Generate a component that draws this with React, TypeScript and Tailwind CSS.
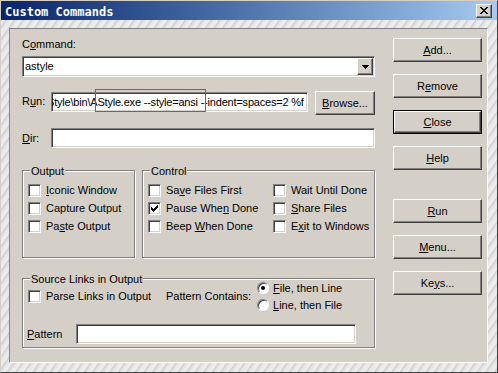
import React from "react";

const sunken =
  "border border-t-[#808080] border-l-[#808080] border-b-white border-r-white shadow-[inset_1px_1px_0_#404040,inset_-1px_-1px_0_#d4d0c8]";
const raised =
  "border border-t-white border-l-white border-b-[#404040] border-r-[#404040] shadow-[inset_-1px_-1px_0_#808080]";

function pixelPath(rows: string[]) {
  let d = "";
  rows.forEach((row, y) => {
    row.split("").forEach((c, x) => {
      if (c === "#") d += `M${x} ${y}h1v1h-1z`;
    });
  });
  return d;
}

const checkMark = pixelPath([
  "......#",
  ".....##",
  "#...###",
  "##.###.",
  "#####..",
  ".###...",
  "..#....",
]);

const closeX = pixelPath([
  "##....##",
  ".##..##.",
  "..####..",
  "...##...",
  "..####..",
  ".##..##.",
  "##....##",
]);

function Btn(props: { children: React.ReactNode; isDefault?: boolean; className?: string; w?: string }) {
  return (
    <div className={`${props.w ?? "w-[89px]"} h-[24px] ${props.isDefault ? "border border-black" : ""} ${props.className ?? ""}`}>
      <div className={`w-full h-full flex items-center justify-center ${raised}`}>{props.children}</div>
    </div>
  );
}

function Check(props: { checked?: boolean; children: React.ReactNode }) {
  return (
    <div className="flex items-center gap-[5px] h-[13px]">
      <span className={`relative block w-[13px] h-[13px] shrink-0 bg-white ${sunken}`}>
        {props.checked && (
          <svg className="absolute left-[2px] top-[2px]" width="7" height="7" viewBox="0 0 7 7">
            <path d={checkMark} fill="black" />
          </svg>
        )}
      </span>
      <span className="whitespace-nowrap">{props.children}</span>
    </div>
  );
}

function Radio(props: { on?: boolean; children: React.ReactNode }) {
  return (
    <div className="flex items-center gap-[4px] h-[12px]">
      <span className="relative flex items-center justify-center w-[12px] h-[12px] shrink-0 rounded-full bg-white border border-t-[#808080] border-l-[#808080] border-b-white border-r-white shadow-[inset_1px_1px_0_#404040]">
        {props.on && <span className="block w-[4px] h-[4px] rounded-full bg-black" />}
      </span>
      <span className="whitespace-nowrap">{props.children}</span>
    </div>
  );
}

function Group(props: { title: string; className?: string; children?: React.ReactNode }) {
  return (
    <div className={`relative border border-[#808080] shadow-[inset_1px_1px_0_#fff,1px_1px_0_#fff] ${props.className ?? ""}`}>
      <span className="absolute left-[7px] -top-[6px] px-[1px] bg-[#d4d0c8] leading-[13px] whitespace-nowrap">{props.title}</span>
      {props.children}
    </div>
  );
}

export default function App() {
  return (
    <div className="relative w-[498px] h-[373px] flex flex-col border border-t-[#d4d0c8] border-l-[#d4d0c8] border-r-[#404040] border-b-[#404040] bg-[#dcdcdc] font-['Liberation_Sans',Arial,sans-serif] text-[11px] leading-[13px] text-black overflow-hidden">
      {/* title bar */}
      <div className="h-[19px] shrink-0 flex items-center justify-between pl-[4px] pr-[5px] bg-gradient-to-r from-[#0a246a] to-[#a6caf0]">
        <span className="mt-[3px] font-['DejaVu_Sans_Mono',monospace] font-bold text-[12px] leading-[14px] text-white">Custom Commands</span>
        <div className={`w-[16px] h-[14px] flex items-center justify-center bg-[#d4d0c8] ${raised}`}>
          <svg width="8" height="7" viewBox="0 0 8 7">
            <path d={closeX} fill="black" />
          </svg>
        </div>
      </div>

      {/* textured frame */}
      <div className="flex-1 pl-[8px] pt-[8px] pr-[9px] pb-[9px] bg-[repeating-linear-gradient(125deg,#ececec_0px,#ececec_3px,#cdcdcd_4px,#dedede_5px,#e8e8e8_7px)]">
        <div className="w-full h-full flex bg-[#d4d0c8] border border-t-[#808080] border-l-[#808080] border-b-white border-r-white">
          {/* left column */}
          <div className="ml-[12px] w-[353px] flex flex-col">
            <div className="mt-[9px] h-[13px]">
              C<u>o</u>mmand:
            </div>
            <div className={`mt-[5px] h-[21px] flex items-center bg-white ${sunken}`}>
              <span className="flex-1 pl-[2px]">astyle</span>
              <div className={`mr-[1px] w-[16px] h-[17px] flex items-center justify-center bg-[#d4d0c8] ${raised}`}>
                <svg width="7" height="4" viewBox="0 0 7 4">
                  <path d="M0 0h7v1h-7z M1 1h5v1h-5z M2 2h3v1h-3z M3 3h1v1h-1z" fill="black" />
                </svg>
              </div>
            </div>

            <div className="mt-[14px] h-[22px] flex items-start">
              <span className="w-[29px] mt-[4px]">
                R<u>u</u>n:
              </span>
              <div className={`mt-[1px] w-[257px] h-[20px] flex items-center overflow-hidden bg-white ${sunken}`}>
                <span className="-ml-[5px] whitespace-nowrap tracking-[-0.2px]">Style\bin\AStyle.exe --style=ansi --indent=spaces=2 %f</span>
              </div>
              <Btn w="w-[60px]" className="ml-[7px] h-[22px]">
                <span>
                  <u>B</u>rowse...
                </span>
              </Btn>
            </div>

            <div className="mt-[15px] h-[20px] flex items-center">
              <span className="w-[29px]">
                <u>D</u>ir:
              </span>
              <div className={`w-[324px] h-[20px] bg-white ${sunken}`} />
            </div>

            <div className="mt-[22px] flex gap-[7px]">
              <Group title="Output" className="w-[113px] h-[88px]">
                <div className="pl-[5px] pt-[13px] flex flex-col gap-[5px]">
                  <Check>
                    <u>I</u>conic Window
                  </Check>
                  <Check>Capture Output</Check>
                  <Check>
                    Pa<u>s</u>te Output
                  </Check>
                </div>
              </Group>
              <Group title="Control" className="w-[233px] h-[88px]">
                <div className="pl-[5px] pt-[13px] grid grid-cols-[125px_1fr] gap-y-[5px]">
                  <Check>
                    Sa<u>v</u>e Files First
                  </Check>
                  <Check>Wait Until Done</Check>
                  <Check checked>
                    Pause Whe<u>n</u> Done
                  </Check>
                  <Check>
                    <u>S</u>hare Files
                  </Check>
                  <Check>
                    Beep <u>W</u>hen Done
                  </Check>
                  <Check>
                    E<u>x</u>it to Windows
                  </Check>
                </div>
              </Group>
            </div>

            <Group title="Source Links in Output" className="mt-[20px] h-[70px]">
              <div className="pl-[5px] pt-[3px] flex items-center">
                <div className="w-[138px]">
                  <Check>Parse Links in Output</Check>
                </div>
                <span className="w-[91px] whitespace-nowrap">Pattern Contains:</span>
                <div className="flex flex-col gap-[5px]">
                  <Radio on>
                    <u>F</u>ile, then Line
                  </Radio>
                  <Radio>
                    <u>L</u>ine, then File
                  </Radio>
                </div>
              </div>
              <div className="mt-[13px] pl-[4px] flex items-center">
                <span className="w-[49px]">
                  <u>P</u>attern
                </span>
                <div className={`w-[280px] h-[20px] bg-white ${sunken}`} />
              </div>
            </Group>
          </div>

          {/* right column */}
          <div className="ml-[18px] flex flex-col">
            <Btn className="mt-[9px]">
              <span>
                <u>A</u>dd...
              </span>
            </Btn>
            <Btn className="mt-[12px]">
              <span>
                R<u>e</u>move
              </span>
            </Btn>
            <Btn isDefault className="mt-[12px]">
              <span>
                <u>C</u>lose
              </span>
            </Btn>
            <Btn className="mt-[12px]">
              <span>
                <u>H</u>elp
              </span>
            </Btn>
            <Btn className="mt-[29px]">
              <span>
                <u>R</u>un
              </span>
            </Btn>
            <Btn className="mt-[12px]">
              <span>
                <u>M</u>enu...
              </span>
            </Btn>
            <Btn className="mt-[12px]">
              <span>
                Ke<u>y</u>s...
              </span>
            </Btn>
          </div>
        </div>
      </div>

      {/* red annotation box */}
      <svg className="absolute left-[94px] top-[88px]" width="111" height="23" viewBox="0 0 111 23">
        <rect x="0.5" y="0.5" width="110" height="22" fill="none" stroke="#ff2a2a" strokeWidth="1" />
      </svg>
    </div>
  );
}
